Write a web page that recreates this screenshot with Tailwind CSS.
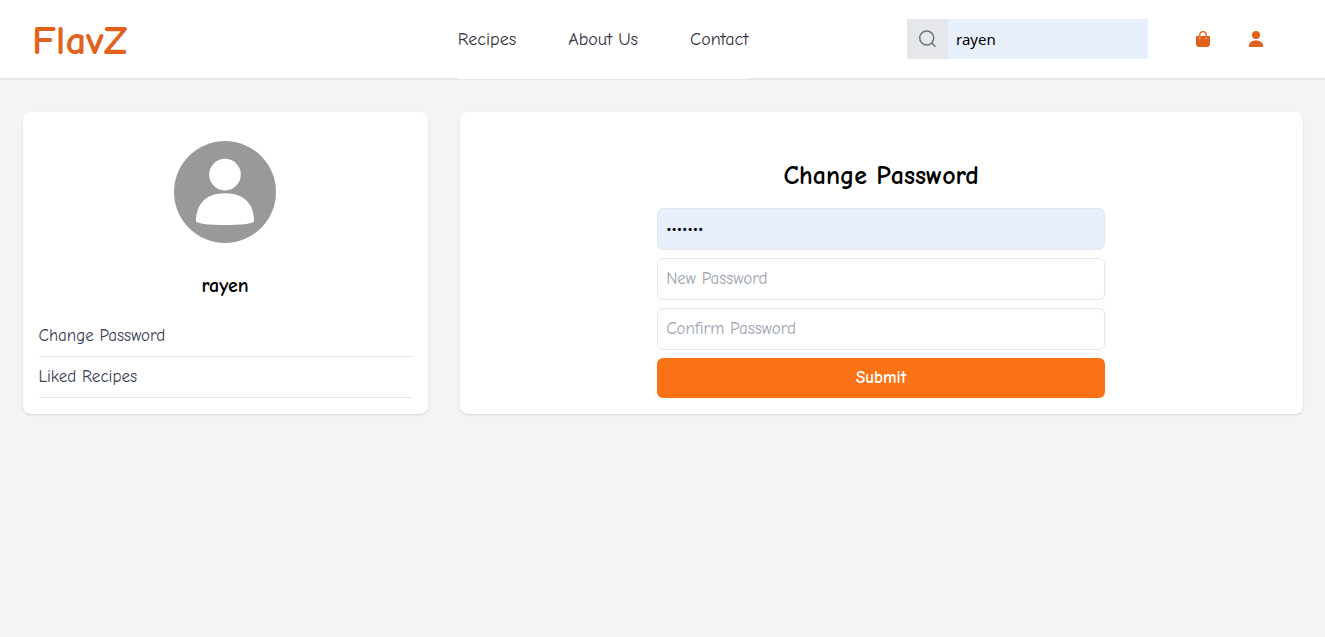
<!DOCTYPE html>
<html lang="en">
<head>
<meta charset="utf-8">
<meta name="viewport" content="width=device-width, initial-scale=1">
<title>FlavZ - Change Password</title>
<script src="https://cdn.jsdelivr.net/npm/@tailwindcss/browser@4"></script>
</head>
<body class="min-h-screen bg-[#f3f4f6] font-['Comic_Neue','Comic_Sans_MS','Liberation_Sans',sans-serif] text-[17px] leading-6 text-black">
<header class="flex h-20 items-center border-b-2 border-[#e5e7eb] bg-white pl-8 pr-[61px]">
  <div class="grow-[25]"><a href="#" class="inline-block pt-1 text-[41px] leading-10 font-bold text-[#e2611c]">FlavZ</a></div>
  <nav class="-mb-px h-[79px] grow-[12]" aria-label="Main">
    <ul class="flex h-full w-fit items-center gap-[52px] bg-white text-lg text-[#333340]">
      <li><a href="#">Recipes</a></li>
      <li><a href="#">About Us</a></li>
      <li><a href="#">Contact</a></li>
    </ul>
  </nav>
  <div class="flex items-center">
    <form class="flex h-10 items-stretch" role="search">
      <button type="button" aria-label="Search" class="flex w-[41px] items-center justify-center bg-[#e5e7eb] text-[#6b7280]">
        <svg class="size-5" viewBox="0 0 20 20" fill="none" stroke="currentColor" stroke-width="1.5" stroke-linecap="round"><circle cx="8.700" cy="9" r="7"/><path d="M13.800 14.100L17 17.300"/></svg>
      </button>
      <input type="text" aria-label="Search recipes" value="rayen" class="w-[200px] bg-[#e8f0fe] px-2 font-['Noto_Sans',sans-serif] text-[15px] outline-none">
    </form>
    <a href="#" aria-label="Shopping bag" class="ml-[47px] text-[#e2611c]">
      <svg class="size-4" viewBox="0 0 16 16"><path d="M4.800 5.500V3.700C4.800 1.900 6.100.7 8 .7s3.200 1.200 3.200 3V5.500" fill="none" stroke="currentColor" stroke-width="1.300"/><path fill="currentColor" fill-rule="evenodd" d="M2 5h12c.6 0 1 .4 1 1v7c0 1.800-1.100 3-2.900 3H3.900C2.100 16 1 14.800 1 13V6c0-.6.4-1 1-1zM4.800 6.600a.7.7 0 100 1.400.7.7 0 000-1.400zm6.400 0a.7.7 0 100 1.400.7.7 0 000-1.400z"/></svg>
    </a>
    <a href="#" aria-label="Account" class="ml-[37px] text-[#e2611c]">
      <svg class="size-4" viewBox="0 0 16 16" fill="currentColor"><circle cx="8" cy="4" r="4"/><path d="M1 16v-1.500C1 11.500 3.800 9.500 8 9.500s7 2 7 5V16z"/></svg>
    </a>
  </div>
</header>
<main class="mx-auto mt-8 grid max-w-[1280px] grid-cols-3 gap-8">
  <aside class="flex flex-col rounded-lg bg-white p-4 shadow-sm">
    <svg class="size-32 self-center" viewBox="0 0 128 128" role="img" aria-label="Profile picture">
      <circle cx="64" cy="64" r="51" fill="#999"/>
      <circle cx="64" cy="46.600" r="15.800" fill="#fff"/>
      <path d="M35 93C35 76 45 65.200 64 65.200S93 76 93 93C93 95.500 81 97 64 97S35 95.500 35 93z" fill="#fff"/>
    </svg>
    <h2 class="my-4 text-center text-xl font-bold">rayen</h2>
    <ul class="text-[#374151]">
      <li class="border-b border-[#e5e7eb] py-2"><a href="#">Change Password</a></li>
      <li class="border-b border-[#e5e7eb] py-2"><a href="#">Liked Recipes</a></li>
    </ul>
  </aside>
  <section class="col-span-2 rounded-lg bg-white p-4 shadow-sm">
    <h1 class="mt-8 mb-4 text-center text-[26px] leading-8 font-bold">Change Password</h1>
    <form class="mx-auto flex max-w-md flex-col gap-2">
      <input type="password" aria-label="Current Password" value="1234567" class="rounded-md border border-[#e5e7eb] bg-[#e8f0fe] p-2 outline-none">
      <input type="password" aria-label="New Password" placeholder="New Password" class="rounded-md border border-[#e5e7eb] p-2 outline-none placeholder:text-[#9ca3af]">
      <input type="password" aria-label="Confirm Password" placeholder="Confirm Password" class="rounded-md border border-[#e5e7eb] p-2 outline-none placeholder:text-[#9ca3af]">
      <button type="button" class="rounded-md bg-[#f97316] p-2 font-bold text-white">Submit</button>
    </form>
  </section>
</main>
</body>
</html>
